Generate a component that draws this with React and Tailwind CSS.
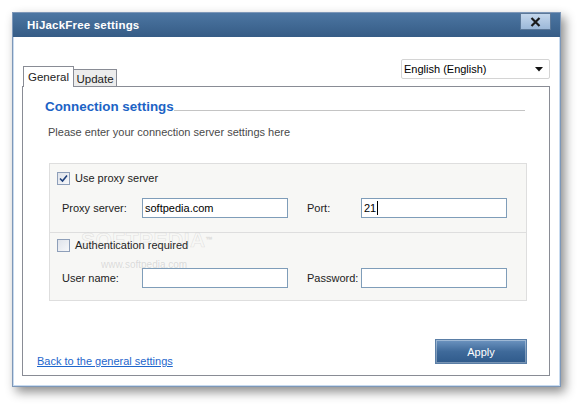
import React from "react";

const font = { fontFamily: '"Liberation Sans", Arial, sans-serif' };

function Checkbox({ checked }) {
  return (
    <div className="w-[13px] h-[13px] border border-[#8e9fb9] bg-gradient-to-br from-[#dfe3ea] to-[#f7f8fa] flex items-center justify-center">
      {checked && (
        <svg width="9" height="9" viewBox="0 0 9 9">
          <path d="M1 4.5 L3.5 7 L8 1.5" fill="none" stroke="#1d3f7a" strokeWidth="1.6" />
        </svg>
      )}
    </div>
  );
}

function Field({ label, value, caret, labelW }) {
  return (
    <div className="flex items-center">
      <div className={labelW}>{label}</div>
      <div className="w-[146px] h-[20px] border border-[#7f9db9] bg-white flex items-center px-[2px] text-black">
        {value}
        {caret && <span className="inline-block w-px h-[14px] bg-black ml-px" />}
      </div>
    </div>
  );
}

export default function App() {
  return (
    <div className="w-[581px] h-[407px] bg-white relative overflow-hidden text-[11px] leading-[14px] text-[#222]" style={font}>
      <div className="ml-[12px] mt-[12px] w-[549px] h-[375px] border border-[#7d97b8] bg-white flex flex-col shadow-[4px_5px_10px_rgba(0,0,0,0.45)]">
        {/* title bar */}
        <div className="h-[24px] bg-gradient-to-b from-[#4c76a2] to-[#365c86] flex items-center justify-between pl-[14px] pr-[9px]">
          <span className="text-white font-bold text-[11.5px] tracking-[0.2px]">HiJackFree settings</span>
          <div className="w-[31px] h-[17px] -mt-[7px] border border-[#5c7898] bg-gradient-to-b from-[#c4d7ec] to-[#9cb8d8] flex items-center justify-center">
            <svg width="11" height="10" viewBox="0 0 11 10">
              <path d="M1.5 1 L9.5 9 M9.5 1 L1.5 9" stroke="#1b1b1b" strokeWidth="2.2" />
            </svg>
          </div>
        </div>
        {/* client */}
        <div className="flex-1 border-l border-r border-b border-[#c9dbef] pl-[8px] pr-[9px] pt-[22px]">
          <div className="flex items-start justify-between">
            <div className="flex items-end mt-[7px] pl-px">
              <div className="relative z-10 w-[51px] h-[21px] border border-b-0 border-[#898c95] bg-white flex items-center justify-center -mb-px text-[11.5px]">General</div>
              <div className="w-[43px] h-[17px] border border-l-0 border-b-0 border-[#898c95] bg-[#ececec] flex items-center justify-center pt-px text-[11.5px]">Update</div>
            </div>
            <div className="w-[149px] h-[20px] border border-[#d4d4d4] rounded-[2px] bg-white flex items-center justify-between pl-[2px] pr-[6px] text-black">
              <span>English (English)</span>
              <svg width="8" height="5" viewBox="0 0 8 5"><path d="M0 0 H8 L4 4.5 Z" fill="#111" /></svg>
            </div>
          </div>
          <div className="h-[290px] border border-[#898c95] bg-white flex flex-col">
            <div className="flex items-end pl-[22px] pr-[24px] pt-[12px]">
              <span className="text-[#1c63c5] font-bold text-[13.4px] leading-[16px]">Connection settings</span>
              <div className="flex-1 h-px bg-[#c4c4c4] mb-[4px]" />
            </div>
            <div className="pl-[25px] mt-[10px] text-[#4a4a4a]">Please enter your connection server settings here</div>
            <div className="ml-[26px] mr-[22px] mt-[24px] h-[138px] border border-[#dedede] bg-[#f7f7f5] flex flex-col relative">
              <div className="h-[69px] border-b border-[#dedede] flex flex-col pl-[7px] pt-[7px]">
                <div className="flex items-center gap-[5px]">
                  <Checkbox checked />
                  <span>Use proxy server</span>
                </div>
                <div className="flex items-center pl-[5px] mt-[13px] gap-[19px]">
                  <Field label="Proxy server:" value="softpedia.com" labelW="w-[80px]" />
                  <Field label="Port:" value="21" caret labelW="w-[54px]" />
                </div>
              </div>
              <div className="flex-1 flex flex-col pl-[7px] pt-[5px]">
                <div className="flex items-center gap-[5px]">
                  <Checkbox />
                  <span>Authentication required</span>
                </div>
                <div className="flex items-center pl-[5px] mt-[16px] gap-[19px]">
                  <Field label="User name:" value="" labelW="w-[80px]" />
                  <Field label="Password:" value="" labelW="w-[54px]" />
                </div>
              </div>
              <div className="absolute left-[31px] top-[65px] text-[21px] leading-[22px] font-bold tracking-[0.5px] text-transparent pointer-events-none" style={{ WebkitTextStroke: "0.6px rgba(170,170,170,0.3)" }}>SOFTPEDIA<span className="text-[7px] align-top">™</span></div>
              <div className="absolute left-[51px] top-[96px] text-[10px] leading-[10px] text-[rgba(150,150,150,0.3)] pointer-events-none">www.softpedia.com</div>
            </div>
            <div className="mt-auto flex items-end justify-between pl-[14px] pr-[22px] pb-[11px]">
              <span className="text-[#1e66cc] underline -mb-[4px]">Back to the general settings</span>
              <div className="w-[92px] h-[25px] border border-[#5a7ea6] bg-gradient-to-b from-[#6d94c0] via-[#3f6a9a] to-[#2f5a8b] shadow-[inset_0_0_0_1px_rgba(255,255,255,0.35)] flex items-center justify-center text-white">Apply</div>
            </div>
          </div>
        </div>
      </div>
    </div>
  );
}
